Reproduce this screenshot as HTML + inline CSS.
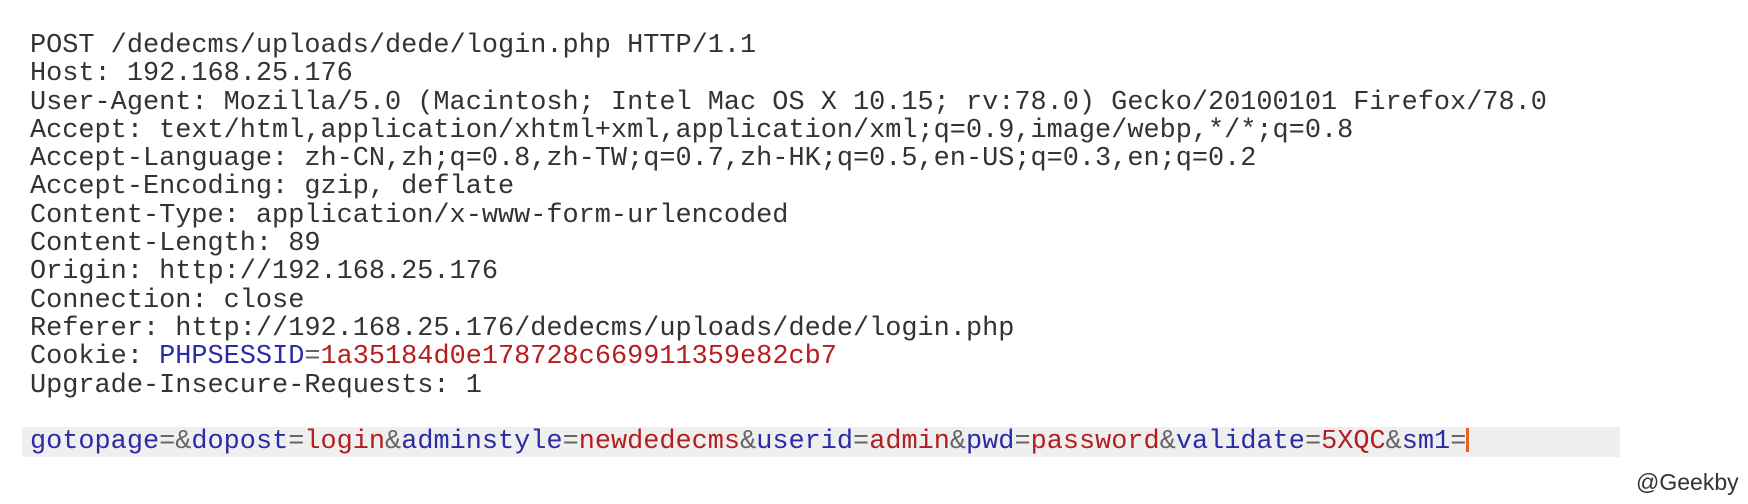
<!DOCTYPE html>
<html><head><meta charset="utf-8"><style>
html,body{margin:0;padding:0;background:#fff;width:1748px;height:504px;overflow:hidden;position:relative}
pre{position:absolute;left:30px;top:32px;margin:0;font-family:"Liberation Mono",monospace;font-size:26.9px;line-height:28.3px;color:#333;white-space:pre}
.b{color:#2b2ba8}.r{color:#b41e1e}.g{color:#666}
.band{position:absolute;left:22px;top:427px;width:1598px;height:30px;background:#efefef}
.cur{display:inline-block;width:3px;height:24px;background:#e8641e;vertical-align:-4px}
.w{position:absolute;left:1636px;top:469px;font-family:"Liberation Sans",sans-serif;font-size:23px;color:#333}
</style></head><body>
<div class="band"></div>
<pre>POST /dedecms/uploads/dede/login.php HTTP/1.1
Host: 192.168.25.176
User-Agent: Mozilla/5.0 (Macintosh; Intel Mac OS X 10.15; rv:78.0) Gecko/20100101 Firefox/78.0
Accept: text/html,application/xhtml+xml,application/xml;q=0.9,image/webp,*/*;q=0.8
Accept-Language: zh-CN,zh;q=0.8,zh-TW;q=0.7,zh-HK;q=0.5,en-US;q=0.3,en;q=0.2
Accept-Encoding: gzip, deflate
Content-Type: application/x-www-form-urlencoded
Content-Length: 89
Origin: http://192.168.25.176
Connection: close
Referer: http://192.168.25.176/dedecms/uploads/dede/login.php
Cookie: <span class="b">PHPSESSID</span><span class="g">=</span><span class="r">1a35184d0e178728c669911359e82cb7</span>
Upgrade-Insecure-Requests: 1

<span class="b">gotopage</span><span class="g">=&amp;</span><span class="b">dopost</span><span class="g">=</span><span class="r">login</span><span class="g">&amp;</span><span class="b">adminstyle</span><span class="g">=</span><span class="r">newdedecms</span><span class="g">&amp;</span><span class="b">userid</span><span class="g">=</span><span class="r">admin</span><span class="g">&amp;</span><span class="b">pwd</span><span class="g">=</span><span class="r">password</span><span class="g">&amp;</span><span class="b">validate</span><span class="g">=</span><span class="r">5XQC</span><span class="g">&amp;</span><span class="b">sm1</span><span class="g">=</span><span class="cur"></span></pre>
<div class="w">@Geekby</div>
</body></html>
